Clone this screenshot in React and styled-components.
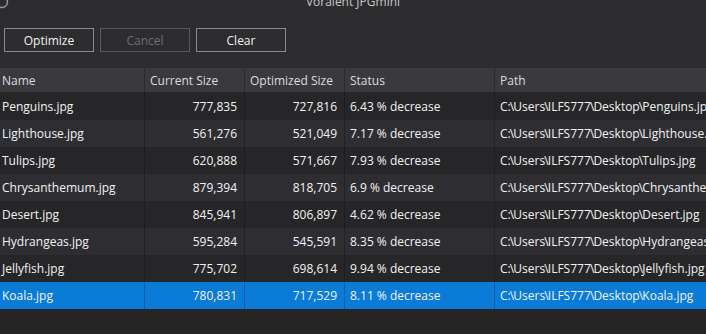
import React from 'react';
import styled, { createGlobalStyle } from 'styled-components';

const GlobalStyle = createGlobalStyle`
  html, body {
    margin: 0;
    padding: 0;
    background: #2d2d30;
    overflow: hidden;
  }
  body {
    font-family: "Open Sans", "Noto Sans", sans-serif;
    font-size: 12px;
  }
`;

const files = [
    { name: 'Penguins.jpg', current: '777,835', optimized: '727,816', status: '6.43 % decrease' },
    { name: 'Lighthouse.jpg', current: '561,276', optimized: '521,049', status: '7.17 % decrease' },
    { name: 'Tulips.jpg', current: '620,888', optimized: '571,667', status: '7.93 % decrease' },
    { name: 'Chrysanthemum.jpg', current: '879,394', optimized: '818,705', status: '6.9 % decrease' },
    { name: 'Desert.jpg', current: '845,941', optimized: '806,897', status: '4.62 % decrease' },
    { name: 'Hydrangeas.jpg', current: '595,284', optimized: '545,591', status: '8.35 % decrease' },
    { name: 'Jellyfish.jpg', current: '775,702', optimized: '698,614', status: '9.94 % decrease' },
    { name: 'Koala.jpg', current: '780,831', optimized: '717,529', status: '8.11 % decrease' },
];

const Window = styled.div`
    display: flex;
    flex-direction: column;
    width: 706px;
    height: 334px;
    background: #2d2d30;
    overflow: hidden;
`;

const TitleBar = styled.div`
    position: relative;
    height: 28px;
    display: flex;
    justify-content: center;
    color: #c8c8c8;
    .title{
        margin-top: -7px;
        line-height: 18px;
    }
`;

const AppIcon = styled.svg`
    position: absolute;
    left: -5px;
    top: -5px;
`;

const Toolbar = styled.div`
    display: flex;
    gap: 6px;
    padding: 0 4px;
    height: 40px;
`;

const Button = styled.button`
    width: 90px;
    height: 24px;
    background: transparent;
    border: 1px solid ${p => p.disabled ? '#5a5a5e' : '#8a8a8e'};
    color: ${p => p.disabled ? '#6e6e72' : '#f1f1f1'};
    font-family: "Open Sans", "Noto Sans", sans-serif;
    font-size: 12px;
    padding: 0;
    cursor: default;
`;

const Table = styled.div`
    flex: 1;
    background: #252526;
    display: flex;
    flex-direction: column;
`;

const Row = styled.div`
    display: grid;
    grid-template-columns: 145px 100px 100px 150px 1fr;
    height: ${p => p.header ? '24px' : '27px'};
    margin-bottom: ${p => p.header ? '1px' : '0'};
    background: ${p => p.header ? '#3a3a3e' : p.selected ? '#0a7bd6' : p.odd ? '#2e2e32' : '#262628'};
    color: ${p => p.header ? '#dcdcdc' : '#f2f2f2'};
`;

const Cell = styled.div`
    display: flex;
    align-items: center;
    justify-content: ${p => p.right ? 'flex-end' : 'flex-start'};
    padding: ${p => p.right ? '0 7px 0 0' : p.first ? '0 0 0 2px' : '0 0 0 5px'};
    border-right: 1px solid ${p => p.head ? '#2b2b2e' : 'rgba(0, 0, 0, 0.22)'};
    white-space: nowrap;
    overflow: hidden;
    &:last-child{
        border-right: none;
    }
`;

const Sep = styled.span`
    margin: 0 -0.9px;
`;

const PathText = ({ file }) => {
    const parts = ['C:', 'Users', 'ILFS777', 'Desktop', file];
    return (
        <span>
            {parts.map((p, i) => (
                <React.Fragment key={i}>
                    {i > 0 && <Sep>\</Sep>}
                    {p}
                </React.Fragment>
            ))}
        </span>
    );
};

export default function App() {
    return (
        <Window>
            <GlobalStyle />
            <TitleBar>
                <AppIcon width="14" height="14" viewBox="0 0 14 14">
                    <circle cx="7" cy="7" r="5.5" fill="none" stroke="#9a9a9e" strokeWidth="1.4" />
                </AppIcon>
                <span className="title">Voralent JPGmini</span>
            </TitleBar>
            <Toolbar>
                <Button>Optimize</Button>
                <Button disabled>Cancel</Button>
                <Button>Clear</Button>
            </Toolbar>
            <Table>
                <Row header>
                    <Cell head first>Name</Cell>
                    <Cell head>Current Size</Cell>
                    <Cell head>Optimized Size</Cell>
                    <Cell head>Status</Cell>
                    <Cell head>Path</Cell>
                </Row>
                {files.map((f, i) => (
                    <Row key={f.name} odd={i % 2 === 1} selected={i === files.length - 1}>
                        <Cell first>{f.name}</Cell>
                        <Cell right>{f.current}</Cell>
                        <Cell right>{f.optimized}</Cell>
                        <Cell>{f.status}</Cell>
                        <Cell><PathText file={f.name} /></Cell>
                    </Row>
                ))}
            </Table>
        </Window>
    );
}
